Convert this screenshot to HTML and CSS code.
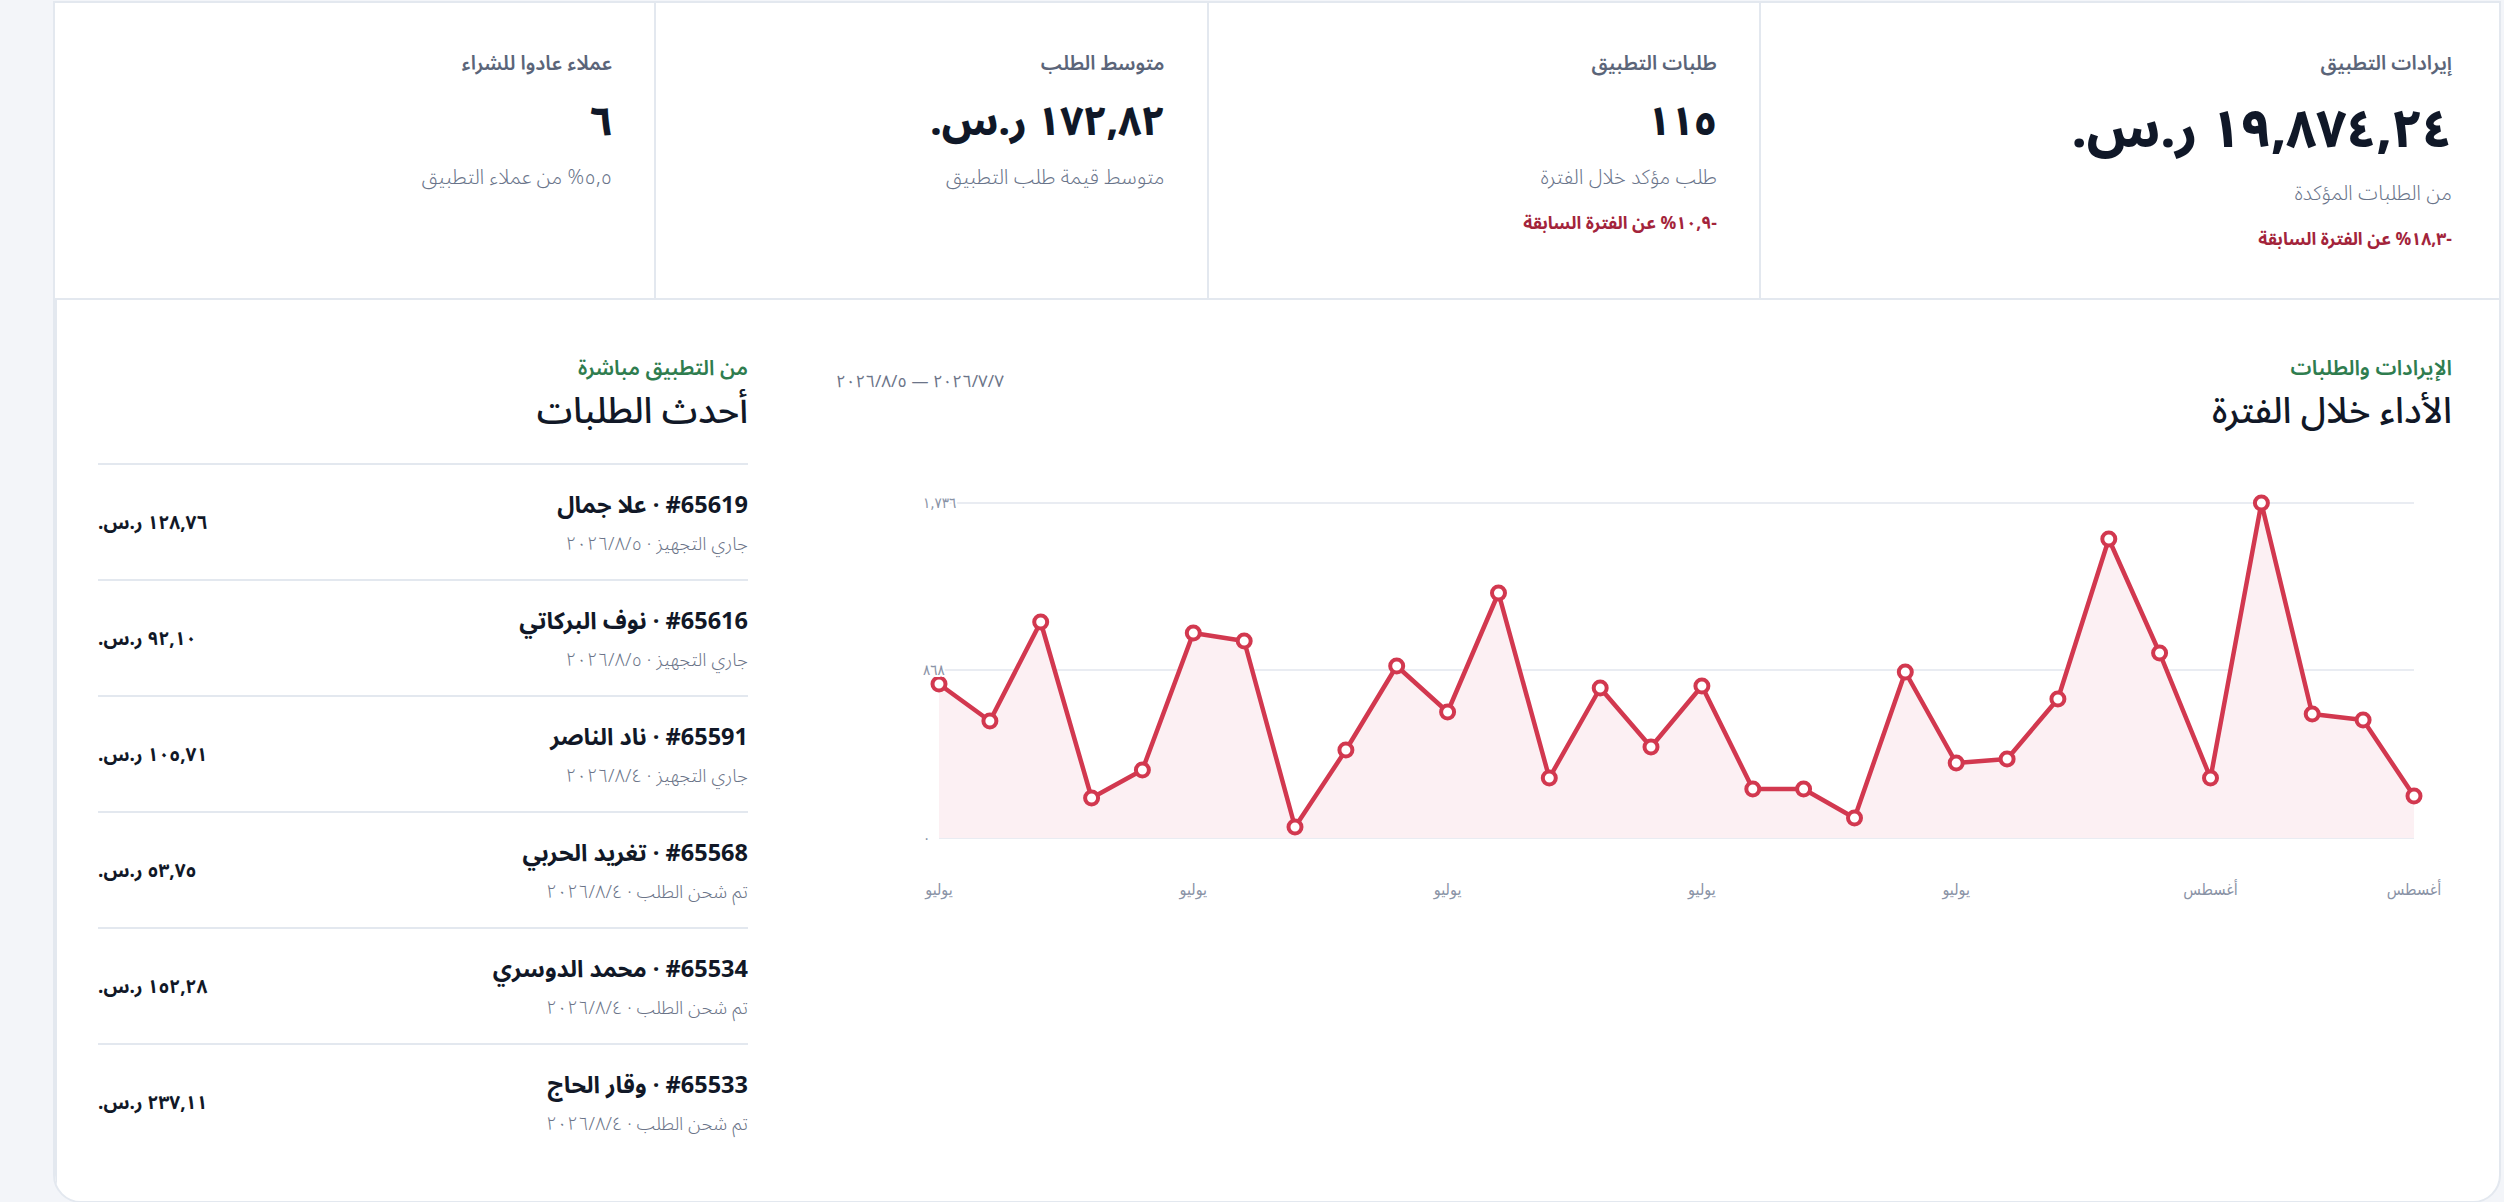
FILE: index.html
```html
<!DOCTYPE html>
<html lang="ar" dir="rtl">

<head>
    <meta charset="UTF-8">
    <meta name="viewport" content="width=device-width, initial-scale=1.0">
    <title>لوحة التطبيق</title>
    <link rel="stylesheet" href="styles.css">
</head>

<body>
    <div class="card">
        <div class="stats">
            <div class="stat stat-main">
                <div class="stat-label">إيرادات التطبيق</div>
                <div class="stat-value">١٩,٨٧٤,٢٤ ر.س.</div>
                <div class="stat-sub">من الطلبات المؤكدة</div>
                <div class="stat-change">-١٨,٣% عن الفترة السابقة</div>
            </div>
            <div class="stat">
                <div class="stat-label">طلبات التطبيق</div>
                <div class="stat-value">١١٥</div>
                <div class="stat-sub">طلب مؤكد خلال الفترة</div>
                <div class="stat-change">-١٠,٩% عن الفترة السابقة</div>
            </div>
            <div class="stat">
                <div class="stat-label">متوسط الطلب</div>
                <div class="stat-value">١٧٢,٨٢ ر.س.</div>
                <div class="stat-sub">متوسط قيمة طلب التطبيق</div>
            </div>
            <div class="stat">
                <div class="stat-label">عملاء عادوا للشراء</div>
                <div class="stat-value">٦</div>
                <div class="stat-sub">٥,٥% من عملاء التطبيق</div>
            </div>
        </div>

        <div class="lower">
            <section class="chart-panel">
                <div class="panel-head">
                    <div>
                        <div class="eyebrow">الإيرادات والطلبات</div>
                        <h2 class="panel-title">الأداء خلال الفترة</h2>
                    </div>
                    <div class="range">٧&rlm;/٧&rlm;/٢٠٢٦ — ٥&rlm;/٨&rlm;/٢٠٢٦</div>
                </div>

                <svg class="chart" viewBox="0 0 1615 440" width="1615" height="440">
                    <g class="grid">
                        <line x1="102" y1="33" x2="1577" y2="33"></line>
                        <line x1="102" y1="200" x2="1577" y2="200"></line>
                        <line x1="102" y1="368" x2="1577" y2="368"></line>
                    </g>
                    <polygon class="area" points="102,368 102,214 152.9,251 203.7,152 254.6,328 305.4,300 356.3,163 407.2,171 458,357 508.9,280 559.7,196 610.6,242 661.5,123 712.3,308 763.2,218 814,277 864.9,216 915.8,319 966.6,319 1017.5,348 1068.3,202 1119.2,293 1170.1,289 1220.9,229 1271.8,69 1322.6,183 1373.5,308 1424.4,33 1475.2,244 1526.1,250 1577,326 1577,368"></polygon>
                    <polyline class="line" points="102,214 152.9,251 203.7,152 254.6,328 305.4,300 356.3,163 407.2,171 458,357 508.9,280 559.7,196 610.6,242 661.5,123 712.3,308 763.2,218 814,277 864.9,216 915.8,319 966.6,319 1017.5,348 1068.3,202 1119.2,293 1170.1,289 1220.9,229 1271.8,69 1322.6,183 1373.5,308 1424.4,33 1475.2,244 1526.1,250 1577,326"></polyline>
                    <g class="dots">
                        <circle cx="102" cy="214" r="6.5"></circle>
                        <circle cx="152.9" cy="251" r="6.5"></circle>
                        <circle cx="203.7" cy="152" r="6.5"></circle>
                        <circle cx="254.6" cy="328" r="6.5"></circle>
                        <circle cx="305.4" cy="300" r="6.5"></circle>
                        <circle cx="356.3" cy="163" r="6.5"></circle>
                        <circle cx="407.2" cy="171" r="6.5"></circle>
                        <circle cx="458" cy="357" r="6.5"></circle>
                        <circle cx="508.9" cy="280" r="6.5"></circle>
                        <circle cx="559.7" cy="196" r="6.5"></circle>
                        <circle cx="610.6" cy="242" r="6.5"></circle>
                        <circle cx="661.5" cy="123" r="6.5"></circle>
                        <circle cx="712.3" cy="308" r="6.5"></circle>
                        <circle cx="763.2" cy="218" r="6.5"></circle>
                        <circle cx="814" cy="277" r="6.5"></circle>
                        <circle cx="864.9" cy="216" r="6.5"></circle>
                        <circle cx="915.8" cy="319" r="6.5"></circle>
                        <circle cx="966.6" cy="319" r="6.5"></circle>
                        <circle cx="1017.5" cy="348" r="6.5"></circle>
                        <circle cx="1068.3" cy="202" r="6.5"></circle>
                        <circle cx="1119.2" cy="293" r="6.5"></circle>
                        <circle cx="1170.1" cy="289" r="6.5"></circle>
                        <circle cx="1220.9" cy="229" r="6.5"></circle>
                        <circle cx="1271.8" cy="69" r="6.5"></circle>
                        <circle cx="1322.6" cy="183" r="6.5"></circle>
                        <circle cx="1373.5" cy="308" r="6.5"></circle>
                        <circle cx="1424.4" cy="33" r="6.5"></circle>
                        <circle cx="1475.2" cy="244" r="6.5"></circle>
                        <circle cx="1526.1" cy="250" r="6.5"></circle>
                        <circle cx="1577" cy="326" r="6.5"></circle>
                    </g>
                    <g class="y-labels">
                        <text x="86" y="33">١,٧٣٦</text>
                        <text x="86" y="200">٨٦٨</text>
                        <text x="86" y="368">٠</text>
                    </g>
                    <g class="x-labels">
                        <text x="102" y="420">يوليو</text>
                        <text x="356.3" y="420">يوليو</text>
                        <text x="610.6" y="420">يوليو</text>
                        <text x="864.9" y="420">يوليو</text>
                        <text x="1119.2" y="420">يوليو</text>
                        <text x="1373.5" y="420">أغسطس</text>
                        <text x="1577" y="420">أغسطس</text>
                    </g>
                </svg>
            </section>

            <section class="orders">
                <div class="orders-head">
                    <div class="eyebrow">من التطبيق مباشرة</div>
                    <h2 class="panel-title">أحدث الطلبات</h2>
                </div>
                <ul class="order-list">
                    <li class="order">
                        <div>
                            <div class="order-title">#65619 · علا جمال</div>
                            <div class="order-meta">جاري التجهيز · ٥&rlm;/٨&rlm;/٢٠٢٦</div>
                        </div>
                        <div class="order-amount">١٢٨,٧٦ ر.س.</div>
                    </li>
                    <li class="order">
                        <div>
                            <div class="order-title">#65616 · نوف البركاتي</div>
                            <div class="order-meta">جاري التجهيز · ٥&rlm;/٨&rlm;/٢٠٢٦</div>
                        </div>
                        <div class="order-amount">٩٢,١٠ ر.س.</div>
                    </li>
                    <li class="order">
                        <div>
                            <div class="order-title">#65591 · ناد الناصر</div>
                            <div class="order-meta">جاري التجهيز · ٤&rlm;/٨&rlm;/٢٠٢٦</div>
                        </div>
                        <div class="order-amount">١٠٥,٧١ ر.س.</div>
                    </li>
                    <li class="order">
                        <div>
                            <div class="order-title">#65568 · تغريد الحربي</div>
                            <div class="order-meta">تم شحن الطلب · ٤&rlm;/٨&rlm;/٢٠٢٦</div>
                        </div>
                        <div class="order-amount">٥٣,٧٥ ر.س.</div>
                    </li>
                    <li class="order">
                        <div>
                            <div class="order-title">#65534 · محمد الدوسري</div>
                            <div class="order-meta">تم شحن الطلب · ٤&rlm;/٨&rlm;/٢٠٢٦</div>
                        </div>
                        <div class="order-amount">١٥٢,٢٨ ر.س.</div>
                    </li>
                    <li class="order">
                        <div>
                            <div class="order-title">#65533 · وقار الحاج</div>
                            <div class="order-meta">تم شحن الطلب · ٤&rlm;/٨&rlm;/٢٠٢٦</div>
                        </div>
                        <div class="order-amount">٢٣٧,١١ ر.س.</div>
                    </li>
                </ul>
            </section>
        </div>
    </div>
</body>

</html>
```

FILE: styles.css
```css
* {
    margin: 0;
    padding: 0;
    box-sizing: border-box;
}

body {
    background-color: #f3f5f9;
    font-family: "Noto Sans Arabic", "DejaVu Sans", "Noto Sans", sans-serif;
    color: #111827;
}

.card {
    margin: 1px 3px 0 53px;
    background-color: #fff;
    border: 2px solid #e3e8ef;
    border-radius: 0 0 28px 28px;
    overflow: hidden;
}

/* top stats */
.stats {
    display: grid;
    grid-template-columns: 1.34fr 1fr 1fr 1.085fr;
    height: 297px;
    border-bottom: 2px solid #e3e8ef;
}

.stat {
    padding: 46px 42px 0 20px;
    border-left: 2px solid #e3e8ef;
}

.stat:last-child {
    border-left: none;
}

.stat-main {
    padding-right: 47px;
}

.stat-label {
    font-size: 20px;
    line-height: 30px;
    font-weight: 600;
    color: #5b6579;
    margin-bottom: 17px;
}

.stat-value {
    font-size: 40px;
    line-height: 54px;
    font-weight: 800;
    color: #101828;
}

.stat-main .stat-value {
    font-size: 52px;
    line-height: 70px;
}

.stat-sub {
    margin-top: 13px;
    font-size: 20.5px;
    line-height: 30px;
    font-weight: 300;
    color: #69748a;
}

.stat-change {
    margin-top: 17px;
    font-size: 17.5px;
    line-height: 28px;
    font-weight: 700;
    color: #a3243b;
}

/* lower area */
.lower {
    display: grid;
    grid-template-columns: 1fr 733px;
}

.eyebrow {
    font-size: 21px;
    line-height: 32px;
    font-weight: 600;
    color: #2f7d4f;
}

.panel-title {
    margin-top: 4px;
    font-size: 36px;
    line-height: 48px;
    font-weight: 500;
    color: #111827;
}

.chart-panel {
    padding: 52px 47px 0 48px;
}

.panel-head {
    display: flex;
    justify-content: space-between;
    align-items: center;
}

.range {
    font-size: 17px;
    color: #6b7488;
    margin-bottom: 24px;
}

.chart {
    display: block;
    margin-top: 34px;
    direction: ltr;
}

.chart .grid line {
    stroke: #e9ecf2;
    stroke-width: 2;
}

.chart .area {
    fill: #fcf0f3;
}

.chart .line {
    fill: none;
    stroke: #d2384f;
    stroke-width: 4.5;
    stroke-linejoin: round;
}

.chart .dots circle {
    fill: #fff;
    stroke: #d2384f;
    stroke-width: 4;
}

.chart text {
    font-size: 15px;
    fill: #8a93a6;
    font-family: "DejaVu Sans Condensed", "DejaVu Sans", sans-serif;
}

.chart .y-labels text {
    dominant-baseline: middle;
    text-anchor: start;
    stroke: #fff;
    stroke-width: 4px;
    paint-order: stroke;
}

.chart .x-labels text {
    text-anchor: middle;
    dominant-baseline: middle;
    font-size: 16px;
}

/* orders list */
.orders {
    padding: 52px 40px 42px 41px;
    border-left: 2px solid #e3e8ef;
}

.orders-head {
    padding-bottom: 27px;
}

.order-list {
    list-style: none;
}

.order {
    display: flex;
    justify-content: space-between;
    align-items: center;
    height: 116px;
    padding: 21px 0 19px;
    border-top: 2px solid #e3e8ef;
}

.order-title {
    font-size: 23.5px;
    line-height: 38px;
    font-weight: 700;
    color: #111827;
}

.order-meta {
    margin-top: 6px;
    font-size: 18.5px;
    line-height: 28px;
    font-weight: 300;
    color: #6b7488;
}

.order-amount {
    font-size: 19px;
    font-weight: 700;
    color: #111827;
}
```
